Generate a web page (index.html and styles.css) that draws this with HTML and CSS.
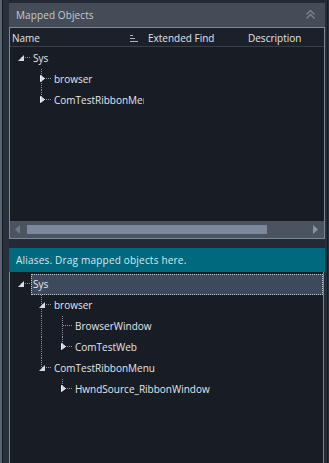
FILE: index.html
```html
<!DOCTYPE html>
<html>
<head>
<meta charset="utf-8">
<link rel="stylesheet" href="styles.css">
</head>
<body>
<div class="app">
  <div class="ledge"></div>
  <div class="main">
    <div class="title">
      <span>Mapped Objects</span>
      <svg class="chev" width="9" height="9" viewBox="0 0 9 9"><polyline points="0.5,4.5 4.5,0.5 8.5,4.5" fill="none" stroke="#7c8491" stroke-width="1.4"/><polyline points="0.5,8.5 4.5,4.5 8.5,8.5" fill="none" stroke="#7c8491" stroke-width="1.4"/></svg>
    </div>
    <div class="grid">
      <div class="cols">
        <div class="col c-name"><span>Name</span>
          <svg class="sort" width="8" height="8" viewBox="0 0 8 8"><rect x="0" y="1" width="3" height="1" fill="#aab0b8"/><rect x="0" y="4" width="5" height="1" fill="#aab0b8"/><rect x="0" y="7" width="8" height="1" fill="#aab0b8"/></svg>
        </div>
        <div class="col c-ext">Extended Find</div>
        <div class="col c-desc">Description</div>
      </div>
      <div class="tree top">
        <div class="row">
          <div class="x root"><svg class="open" width="6" height="6" viewBox="0 0 6 6"><polygon points="6,0 6,6 0,6" fill="#d8dce1"/></svg></div>
          <div class="lbl">Sys</div>
        </div>
        <div class="row">
          <div class="g"></div>
          <div class="x mid"><svg class="closed" width="5" height="7" viewBox="0 0 5 7"><polygon points="0.5,0.5 4.5,3.5 0.5,6.5" fill="#d0d4da" stroke="#eef0f3" stroke-width="1"/></svg></div>
          <div class="lbl">browser</div>
        </div>
        <div class="row">
          <div class="g"></div>
          <div class="x last"><svg class="closed" width="5" height="7" viewBox="0 0 5 7"><polygon points="0.5,0.5 4.5,3.5 0.5,6.5" fill="#d0d4da" stroke="#eef0f3" stroke-width="1"/></svg></div>
          <div class="lbl">ComTestRibbonMenu</div>
        </div>
      </div>
      <div class="hscroll">
        <svg width="5" height="9" viewBox="0 0 5 9"><polygon points="5,0 5,9 0,4.5" fill="#6f7888"/></svg>
        <div class="thumb"></div>
        <svg class="rarrow" width="5" height="9" viewBox="0 0 5 9"><polygon points="0,0 0,9 5,4.5" fill="#8a93a5"/></svg>
      </div>
    </div>
    <div class="aliases">Aliases. Drag mapped objects here.</div>
    <div class="tree bottom">
      <div class="row">
        <div class="x root"><svg class="open" width="6" height="6" viewBox="0 0 6 6"><polygon points="6,0 6,6 0,6" fill="#d8dce1"/></svg></div>
        <div class="lbl sel">Sys</div>
      </div>
      <div class="row">
        <div class="g"></div>
        <div class="x mid"><svg class="open" width="6" height="6" viewBox="0 0 6 6"><polygon points="6,0 6,6 0,6" fill="#d8dce1"/></svg></div>
        <div class="lbl">browser</div>
      </div>
      <div class="row">
        <div class="g"></div>
        <div class="g line"></div>
        <div class="x mid"></div>
        <div class="lbl">BrowserWindow</div>
      </div>
      <div class="row">
        <div class="g"></div>
        <div class="g line"></div>
        <div class="x last"><svg class="closed" width="5" height="7" viewBox="0 0 5 7"><polygon points="0.5,0.5 4.5,3.5 0.5,6.5" fill="#d0d4da" stroke="#eef0f3" stroke-width="1"/></svg></div>
        <div class="lbl">ComTestWeb</div>
      </div>
      <div class="row">
        <div class="g"></div>
        <div class="x last"><svg class="open" width="6" height="6" viewBox="0 0 6 6"><polygon points="6,0 6,6 0,6" fill="#d8dce1"/></svg></div>
        <div class="lbl">ComTestRibbonMenu</div>
      </div>
      <div class="row">
        <div class="g"></div>
        <div class="g"></div>
        <div class="x last"><svg class="closed" width="5" height="7" viewBox="0 0 5 7"><polygon points="0.5,0.5 4.5,3.5 0.5,6.5" fill="#d0d4da" stroke="#eef0f3" stroke-width="1"/></svg></div>
        <div class="lbl">HwndSource_RibbonWindow</div>
      </div>
    </div>
  </div>
  <div class="redge"></div>
</div>
</body>
</html>
```

FILE: styles.css
```css
* { box-sizing: border-box; }
html, body { margin: 0; padding: 0; }
body {
  width: 329px;
  height: 463px;
  overflow: hidden;
  background: #232a35;
  font-family: "Open Sans", "Noto Sans", sans-serif;
  font-size: 10px;
  color: #e3e7ec;
}
.app {
  display: flex;
  height: 463px;
}
.ledge {
  width: 9px;
  flex: none;
  background: linear-gradient(to right, #5b6472 0 2px, #161b22 2px 3px, #28303c 3px);
}
.redge {
  width: 4px;
  flex: none;
  background: linear-gradient(to right, #262e3a 0 2px, #171b22 2px 3px, #262e3a 3px);
}
.main {
  width: 316px;
  flex: none;
  display: flex;
  flex-direction: column;
  padding-top: 3px;
}
.title {
  height: 24px;
  background: #444c58;
  display: flex;
  align-items: center;
  justify-content: space-between;
  padding: 0 10px 1px 7px;
  color: #c6cbd2;
  font-size: 10px;
  letter-spacing: 0.1px;
}
.chev { display: block; }
.grid {
  border: 1px solid #7d879a;
  display: flex;
  flex-direction: column;
  background: #181c24;
}
.cols {
  height: 19px;
  display: flex;
  align-items: center;
  padding-top: 1px;
  border-bottom: 1px solid #373e49;
  background: #1c2129;
  color: #e0e4ea;
}
.col { white-space: nowrap; }
.c-name {
  width: 133px;
  padding-left: 2px;
  display: flex;
  align-items: center;
  justify-content: space-between;
  padding-right: 5px;
}
.sort { display: block; }
.c-ext { width: 100px; padding-left: 5px; }
.c-desc { padding-left: 5px; }
.tree {
  background: #181c24;
  padding-left: 2px;
}
.tree.top {
  height: 174px;
  padding-top: 1px;
}
.top .row { width: 132px; overflow: hidden; }
.row {
  display: flex;
  height: 21px;
}
.g { width: 21px; flex: none; }
.g.line {
  background: repeating-linear-gradient(to bottom, #8c939d 0 1px, transparent 1px 2px) 8px 0 / 1px 100% no-repeat;
}
.x {
  width: 19px;
  flex: none;
  display: flex;
  align-items: flex-start;
  background:
    repeating-linear-gradient(to right, #8c939d 0 1px, transparent 1px 2px) 9px 9px / 10px 1px no-repeat;
}
.x.mid {
  background:
    repeating-linear-gradient(to right, #8c939d 0 1px, transparent 1px 2px) 9px 9px / 10px 1px no-repeat,
    repeating-linear-gradient(to bottom, #8c939d 0 1px, transparent 1px 2px) 8px 0 / 1px 100% no-repeat;
}
.x.last {
  background:
    repeating-linear-gradient(to right, #8c939d 0 1px, transparent 1px 2px) 9px 9px / 10px 1px no-repeat,
    repeating-linear-gradient(to bottom, #8c939d 0 1px, transparent 1px 2px) 8px 0 / 1px 10px no-repeat;
}
.x svg { display: block; }
.x .open { margin: 7px 0 0 6px; }
.x .closed { margin: 6px 0 0 7px; }
.lbl {
  padding-left: 2px;
  line-height: 20px;
  white-space: nowrap;
}
.lbl.sel {
  flex: 1;
  padding-left: 1px;
  line-height: 19px;
  background: #3d4a5e;
  border: 1px dotted #c0c6cf;
}
.hscroll {
  height: 17px;
  background: #4b5361;
  display: flex;
  align-items: center;
  padding: 0 6px 0 5px;
}
.hscroll svg { display: block; }
.thumb {
  width: 240px;
  height: 9px;
  margin-left: 7px;
  background: #7e889c;
}
.rarrow { margin-left: auto; }
.aliases {
  margin-top: 9px;
  height: 24px;
  background: #00697e;
  color: #dfe6ea;
  display: flex;
  align-items: center;
  padding-left: 7px;
  letter-spacing: 0.2px;
}
.tree.bottom {
  flex: 1;
  border-left: 1px solid #7d879a;
  border-right: 1px solid #7d879a;
  padding-top: 2px;
  margin-right: 1px;
}
```
